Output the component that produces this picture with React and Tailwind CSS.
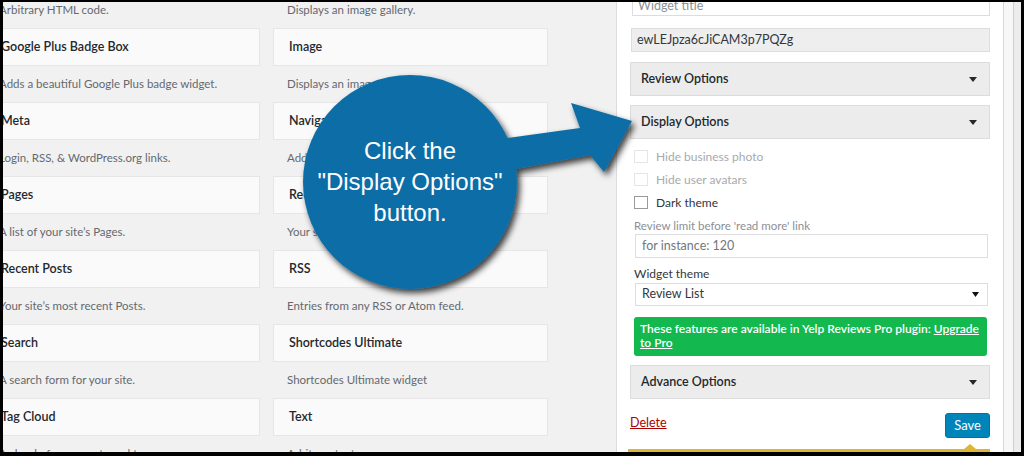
const rows = [
  [
    { t: "Custom HTML", d: "Arbitrary HTML code." },
    { t: "Gallery", d: "Displays an image gallery." },
  ],
  [
    { t: "Google Plus Badge Box", d: "Adds a beautiful Google Plus badge widget." },
    { t: "Image", d: "Displays an image." },
  ],
  [
    { t: "Meta", d: "Login, RSS, & WordPress.org links." },
    { t: "Navigation Menu", d: "Add a navigation menu to your sidebar." },
  ],
  [
    { t: "Pages", d: "A list of your site\u2019s Pages." },
    { t: "Recent Comments", d: "Your site\u2019s most recent comments." },
  ],
  [
    { t: "Recent Posts", d: "Your site\u2019s most recent Posts." },
    { t: "RSS", d: "Entries from any RSS or Atom feed." },
  ],
  [
    { t: "Search", d: "A search form for your site." },
    { t: "Shortcodes Ultimate", d: "Shortcodes Ultimate widget" },
  ],
  [
    { t: "Tag Cloud", d: "A cloud of your most used tags." },
    { t: "Text", d: "Arbitrary text." },
  ],
];

function Caret() {
  return (
    <svg width="8" height="5" viewBox="0 0 8 5" className="shrink-0">
      <path d="M0 0 L8 0 L4 5 Z" fill="#23282d" />
    </svg>
  );
}

function Accordion({ label }) {
  return (
    <div className="h-[34px] bg-[#ececec] border border-[#dcdcdc] flex items-center justify-between pl-[10px] pr-[12px]">
      <span className="text-[12.5px] font-semibold text-[#23282d]">{label}</span>
      <Caret />
    </div>
  );
}

function Check({ label, disabled }) {
  return (
    <div className="h-[23px] flex items-center pl-[4px]">
      <div
        className={
          disabled
            ? "w-[14px] h-[13px] border border-[#e6e6e6] bg-white"
            : "w-[14px] h-[13px] border border-[#9a9a9a] bg-white"
        }
      />
      <span
        className={
          disabled
            ? "ml-[8px] text-[12px] text-[#a7aaad]"
            : "ml-[8px] text-[12px] text-[#32373c]"
        }
      >
        {label}
      </span>
    </div>
  );
}

export default function App() {
  return (
    <div
      className="relative w-[1024px] h-[456px] overflow-hidden border-t-2 border-l-[3px] border-r-[3px] border-b-4 border-black flex bg-[#f1f1f1]"
      style={{ fontFamily: "Lato, 'Noto Sans', sans-serif" }}
    >
      {/* widget list */}
      <div className="w-[613px] shrink-0 overflow-hidden">
        <div className="mt-[-48px] ml-[-18px] grid grid-cols-[275px_275px] gap-x-[13px]">
          {rows.map((r, i) =>
            r.map((c, j) => (
              <div key={i + "-" + j} className="flex flex-col">
                <div className="h-[38px] bg-[#fafafa] border border-[#e6e6e6] flex items-center px-[15px] text-[12.5px] font-semibold text-[#23282d]">
                  {c.t}
                </div>
                <div className="h-[36px] flex items-center px-[14px] text-[11.5px] text-[#646970]">
                  {c.d}
                </div>
              </div>
            ))
          )}
        </div>
      </div>

      {/* widget form panel */}
      <div className="relative w-[387px] shrink-0 bg-white border-l border-[#dcdcdc] pl-[13px] pr-[13px] overflow-hidden">
        <div className="mt-[-10px] ml-[2px] h-[24px] border border-[#dddddd] bg-white flex items-center pt-[4px] px-[5px] text-[12.5px] text-[#8c8f94]">
          Widget title
        </div>
        <div className="mt-[12px] ml-[1px] h-[24px] border border-[#dddddd] bg-[#eeeeee] flex items-center px-[5px] text-[12.5px] text-[#32373c]">
          ewLEJpza6cJiCAM3p7PQZg
        </div>
        <div className="mt-[10px]">
          <Accordion label="Review Options" />
        </div>
        <div className="mt-[9px]">
          <Accordion label="Display Options" />
        </div>
        <div className="mt-[6px] flex flex-col">
          <Check label="Hide business photo" disabled />
          <Check label="Hide user avatars" disabled />
          <Check label="Dark theme" />
        </div>
        <div className="mt-[4px] ml-[4px] h-[16px] leading-[16px] text-[11.5px] text-[#8c8f94]">
          Review limit before 'read more' link
        </div>
        <div className="ml-[5px] mr-[2px] h-[24px] border border-[#dddddd] bg-white flex items-center px-[6px] text-[12.5px] text-[#72777c]">
          for instance: 120
        </div>
        <div className="mt-[8px] ml-[4px] h-[16px] leading-[16px] text-[12px] text-[#32373c]">
          Widget theme
        </div>
        <div className="mt-[1px] ml-[5px] mr-[2px] h-[23px] border border-[#dddddd] bg-white flex items-center justify-between pl-[6px] pr-[8px] text-[12.5px] text-[#32373c]">
          <span>Review List</span>
          <svg width="7" height="5" viewBox="0 0 7 5">
            <path d="M0 0 L7 0 L3.5 5 Z" fill="#111" />
          </svg>
        </div>
        <div className="mt-[11px] ml-[4px] mr-[3px] h-[39px] rounded-[3px] bg-[#13b84e] px-[6px] pt-[5px] text-[12px] leading-[14px] font-semibold text-white">
          These features are available in Yelp Reviews Pro plugin:{" "}
          <span className="underline">Upgrade to Pro</span>
        </div>
        <div className="mt-[9px]">
          <Accordion label="Advance Options" />
        </div>
        <div className="mt-[14px] flex items-start justify-between">
          <span className="mt-[1px] text-[12.5px] text-[#a00] underline">Delete</span>
          <div className="h-[25px] px-[8px] rounded-[3px] bg-[#0085ba] border border-[#0073aa] flex items-center text-[13px] text-white">
            Save
          </div>
        </div>
        <div className="relative mt-[11px] ml-[-2px] h-[6px] bg-[#dcb735]">
          <div className="absolute right-[14px] top-[-5px] w-0 h-0 border-l-[6px] border-r-[6px] border-b-[5px] border-l-transparent border-r-transparent border-b-[#dcb735]" />
        </div>
      </div>

      {/* right gutter */}
      <div className="w-[18px] shrink-0 flex bg-[#f1f1f1] border-l border-[#d8d8d8]">
        <div className="w-[9px] bg-[#f7f7f7]" />
        <div className="w-px bg-[#cfcfcf]" />
        <div className="flex-1 bg-[#ececec]" />
      </div>

      {/* callout */}
      <svg
        className="absolute left-0 top-0 pointer-events-none"
        width="1018"
        height="450"
        viewBox="3 2 1018 450"
      >
        <defs>
          <filter id="sh" x="-20%" y="-20%" width="140%" height="140%">
            <feDropShadow dx="3" dy="4" stdDeviation="3" floodColor="#000" floodOpacity="0.75" />
          </filter>
        </defs>
        <g filter="url(#sh)" fill="#0b6ea7">
          <circle cx="410" cy="182" r="107" />
          <polygon points="485,141 580,128 571,103 632,121 604,172 590,155 495,173" />
        </g>
      </svg>
      <div
        className="absolute left-[307px] top-[133px] w-[200px] text-center text-[24px] leading-[31px] text-white pointer-events-none"
        style={{ fontFamily: "'Liberation Sans', Arial, sans-serif" }}
      >
        Click the
        <br />
        "Display Options"
        <br />
        button.
      </div>
    </div>
  );
}
